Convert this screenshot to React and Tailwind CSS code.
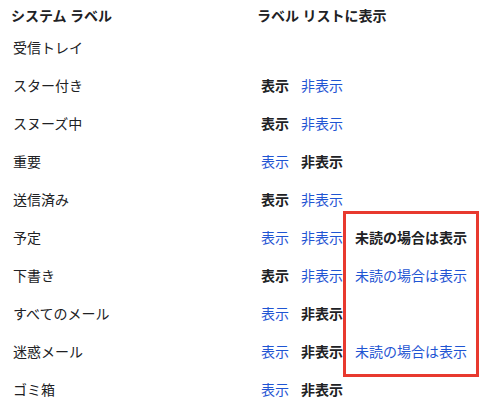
import React from "react";

const rows = [
    { name: "受信トレイ" },
    { name: "スター付き", show: "on" },
    { name: "スヌーズ中", show: "on" },
    { name: "重要", show: "off" },
    { name: "送信済み", show: "on" },
    { name: "予定", show: "unread" },
    { name: "下書き", show: "on", unread: true },
    { name: "すべてのメール", show: "off" },
    { name: "迷惑メール", show: "off", unread: true },
    { name: "ゴミ箱", show: "off" },
];

const Opt = ({ active, children, className }) => (
    <span
        className={
            active
                ? `font-bold text-[#202124] ${className}`
                : `text-[#1f55d3] ${className}`
        }
    >
        {children}
    </span>
);

const App = () => {
    return (
        <div
            className="relative w-[493px] h-[407px] bg-white text-[14px] text-[#202124] overflow-hidden"
            style={{ fontFamily: '"Roboto", "Noto Sans CJK JP", sans-serif' }}
        >
            <div className="flex h-[29px] items-center pt-[3px] pl-[11px] font-bold">
                <span className="w-[246px]">システム ラベル</span>
                <span>ラベル リストに表示</span>
            </div>

            {rows.map((r) => (
                <div key={r.name} className="flex h-[38px] items-center pl-[13px]">
                    <span className="w-[244px]">{r.name}</span>
                    {r.show && (
                        <div className="flex items-center pl-[4px]">
                            <Opt active={r.show === "on"} className="w-[40px]">
                                表示
                            </Opt>
                            <Opt active={r.show === "off"} className="w-[54px]">
                                非表示
                            </Opt>
                            {r.show === "unread" && <Opt active>未読の場合は表示</Opt>}
                            {r.unread && <Opt>未読の場合は表示</Opt>}
                        </div>
                    )}
                </div>
            ))}

            {/* highlight annotation */}
            <div className="absolute left-[343px] top-[211px] w-[136px] h-[166px] border-[3px] border-[#e8392f] pointer-events-none" />
        </div>
    );
};

export default App;
